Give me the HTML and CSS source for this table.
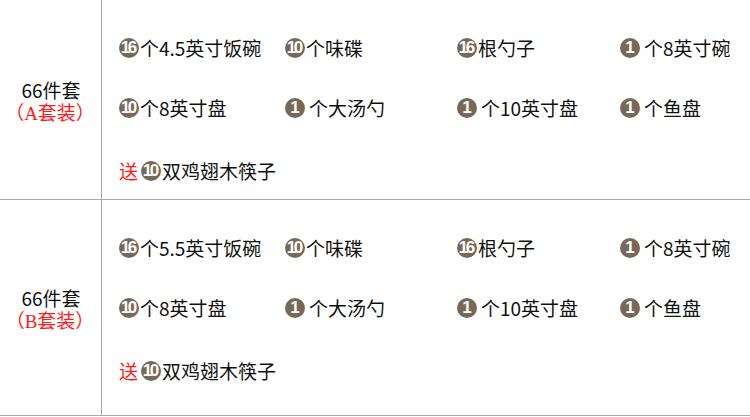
FILE: index.html
```html
<!DOCTYPE html>
<html lang="zh-CN">
<head>
<meta charset="utf-8">
<title>66件套</title>
<link rel="stylesheet" href="styles.css">
</head>
<body>
<div class="table">
  <div class="set set-a">
    <div class="label">
      <div class="name">66件套</div>
      <div class="sub">（A套装）</div>
    </div>
    <div class="items">
      <div class="item"><span class="badge two">16</span>个4.5英寸饭碗</div>
      <div class="item"><span class="badge two">10</span>个味碟</div>
      <div class="item"><span class="badge two">16</span>根勺子</div>
      <div class="item"><span class="badge">1</span><span class="gap">个8英寸碗</span></div>
      <div class="item"><span class="badge two">10</span>个8英寸盘</div>
      <div class="item"><span class="badge">1</span><span class="gap">个大汤勺</span></div>
      <div class="item"><span class="badge">1</span><span class="gap">个10英寸盘</span></div>
      <div class="item"><span class="badge">1</span><span class="gap">个鱼盘</span></div>
      <div class="item gift"><span class="red">送</span><span class="badge two">10</span>双鸡翅木筷子</div>
    </div>
  </div>
  <div class="set set-b">
    <div class="label">
      <div class="name">66件套</div>
      <div class="sub">（B套装）</div>
    </div>
    <div class="items">
      <div class="item"><span class="badge two">16</span>个5.5英寸饭碗</div>
      <div class="item"><span class="badge two">10</span>个味碟</div>
      <div class="item"><span class="badge two">16</span>根勺子</div>
      <div class="item"><span class="badge">1</span><span class="gap">个8英寸碗</span></div>
      <div class="item"><span class="badge two">10</span>个8英寸盘</div>
      <div class="item"><span class="badge">1</span><span class="gap">个大汤勺</span></div>
      <div class="item"><span class="badge">1</span><span class="gap">个10英寸盘</span></div>
      <div class="item"><span class="badge">1</span><span class="gap">个鱼盘</span></div>
      <div class="item gift"><span class="red">送</span><span class="badge two">10</span>双鸡翅木筷子</div>
    </div>
  </div>
</div>
</body>
</html>
```

FILE: styles.css
```css
html, body {
  margin: 0;
  padding: 0;
  background: #ffffff;
}
body {
  width: 750px;
  height: 417px;
  overflow: hidden;
  font-family: "Noto Sans CJK SC", "Noto Sans", sans-serif;
  color: #111111;
}
.table {
  display: flex;
  flex-direction: column;
}
.set {
  display: flex;
  border-bottom: 1px solid #a9a9a9;
}
.set-a { height: 199px; }
.set-b { height: 215px; }
.label {
  width: 102px;
  border-right: 1px solid #a9a9a9;
  display: flex;
  flex-direction: column;
  align-items: center;
  justify-content: center;
  padding-top: 4px;
  box-sizing: border-box;
  font-size: 19px;
  line-height: 24px;
}
.label .name {
  color: #111111;
  margin-left: 1px;
}
.label .sub {
  color: #ff1a1a;
  font-family: "Liberation Serif", "Noto Sans CJK SC", serif;
  margin-left: -1px;
}
.items {
  flex: 1;
  display: grid;
  grid-template-columns: 166px 172px 163px 1fr;
  grid-template-rows: 60px 63px 24px;
  padding: 36px 0 0 17px;
  box-sizing: border-box;
  font-size: 19px;
}
.item {
  display: flex;
  align-items: center;
  height: 24px;
  line-height: 24px;
  white-space: nowrap;
}
.gift {
  grid-column: 1 / -1;
}
.red {
  color: #ff1a1a;
  margin-right: 3px;
}
.badge {
  display: inline-flex;
  align-items: center;
  justify-content: center;
  width: 20px;
  height: 20px;
  border-radius: 50%;
  background: #776858;
  color: #ffffff;
  font-family: "Liberation Sans", Arial, sans-serif;
  font-weight: bold;
  font-size: 17px;
  line-height: 20px;
  margin-right: 1px;
  flex: none;
}
.badge.two {
  letter-spacing: -2.5px;
  text-indent: -2.5px;
}
.gap {
  margin-left: 3px;
}
```
